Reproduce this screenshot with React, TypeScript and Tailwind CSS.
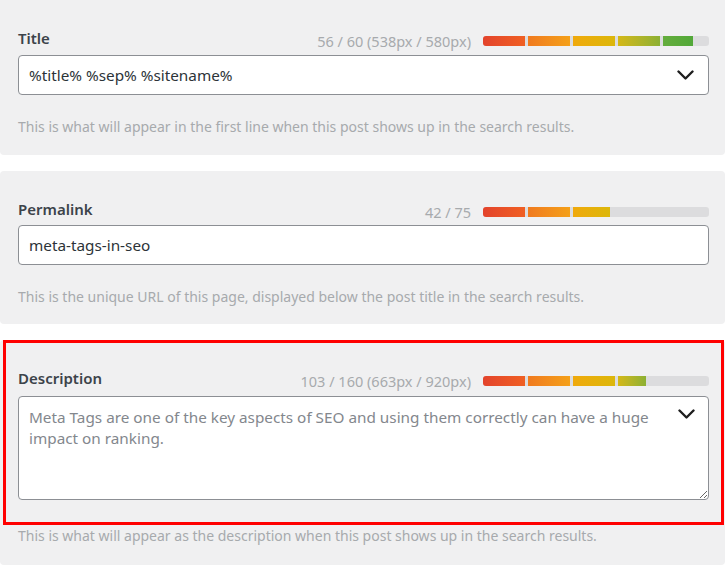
import React from 'react';

const FONT = { fontFamily: '"Noto Sans", "Open Sans", sans-serif' };

const SEG_COLORS = [
  'bg-gradient-to-r from-[#e3432c] to-[#f05f22]',
  'bg-gradient-to-r from-[#f07a1f] to-[#f4a019]',
  'bg-gradient-to-r from-[#f0a90c] to-[#dcb70b]',
  'bg-gradient-to-r from-[#d4b816] to-[#8cb033]',
  'bg-gradient-to-r from-[#64ad3d] to-[#52a839]',
];

const Meter: React.FC<{ fills: number[] }> = ({ fills }) => (
  <div className="flex h-[10px] w-[226px] overflow-hidden rounded-[3px] bg-[#dcdcde]">
    {fills.map((w, i) => (
      <div
        key={i}
        className={`h-full shrink-0 ${SEG_COLORS[i]} ${i > 0 ? 'ml-[3px]' : ''}`}
        style={{ width: w }}
      />
    ))}
  </div>
);

const Chevron = () => (
  <svg width="17" height="10" viewBox="0 0 17 10" fill="none">
    <path d="M1.5 1.5l7 7 7-7" stroke="#1e1e1e" strokeWidth="2.4" strokeLinecap="round" strokeLinejoin="round" />
  </svg>
);

const FieldHeader: React.FC<{ label: string; count: string; fills: number[] }> = ({ label, count, fills }) => (
  <div className="flex h-[20px] items-center justify-between">
    <span className="text-[15px] font-semibold leading-[20px] text-[#3c434a]">{label}</span>
    <div className="mt-[5px] flex items-center gap-[12px]">
      <span className="text-[14.5px] leading-[16px] text-[#a7aaad]">{count}</span>
      <Meter fills={fills} />
    </div>
  </div>
);

const Help: React.FC<{ children: React.ReactNode }> = ({ children }) => (
  <p className="text-[14px] leading-[20px] text-[#a7aaad]">{children}</p>
);

export default function App() {
  return (
    <div className="flex h-[565px] w-[726px] flex-col gap-[16px] overflow-hidden bg-white pr-[1px]" style={FONT}>
      <section className="rounded-b-[4px] bg-[#f0f0f1] px-[18px] pb-[18px] pt-[28px] pr-[16px]">
        <FieldHeader label="Title" count="56 / 60 (538px / 580px)" fills={[42, 42, 42, 42, 30]} />
        <div className="mt-[7px] flex h-[40px] items-center justify-between rounded-[4px] border border-[#8c8f94] bg-white pl-[10px] pr-[14px]">
          <span className="text-[15.3px] text-[#2c3338]">%title% %sep% %sitename%</span>
          <Chevron />
        </div>
        <div className="mt-[22px]">
          <Help>This is what will appear in the first line when this post shows up in the search results.</Help>
        </div>
      </section>

      <section className="rounded-[4px] bg-[#f0f0f1] px-[18px] pb-[17px] pt-[28px] pr-[16px]">
        <FieldHeader label="Permalink" count="42 / 75" fills={[42, 42, 37]} />
        <div className="mt-[6px] flex h-[40px] items-center rounded-[4px] border border-[#8c8f94] bg-white pl-[10px]">
          <span className="text-[15.3px] text-[#2c3338]">meta-tags-in-seo</span>
        </div>
        <div className="mt-[22px]">
          <Help>This is the unique URL of this page, displayed below the post title in the search results.</Help>
        </div>
      </section>

      <section className="flex-1 rounded-[4px] bg-[#f0f0f1] pb-[17px] pl-[3px] pr-[1px]">
        <div className="border-[3px] border-[#ff0000] px-[12px] pb-[22px] pt-[25px]">
          <FieldHeader label="Description" count="103 / 160 (663px / 920px)" fills={[42, 42, 42, 28]} />
          <div className="relative mt-[8px]">
            <textarea
              readOnly
              value="Meta Tags are one of the key aspects of SEO and using them correctly can have a huge impact on ranking."
              className="block h-[104px] w-full rounded-[4px] border border-[#8c8f94] bg-white pb-[8px] pl-[10px] pr-[48px] pt-[10px] text-[15.3px] leading-[21px] text-[#83878d] outline-none"
              style={FONT}
            />
            <div className="pointer-events-none absolute right-[14px] top-[13px]">
              <Chevron />
            </div>
          </div>
        </div>
        <div className="pl-[15px] pt-[1px]">
          <Help>This is what will appear as the description when this post shows up in the search results.</Help>
        </div>
      </section>
    </div>
  );
}
